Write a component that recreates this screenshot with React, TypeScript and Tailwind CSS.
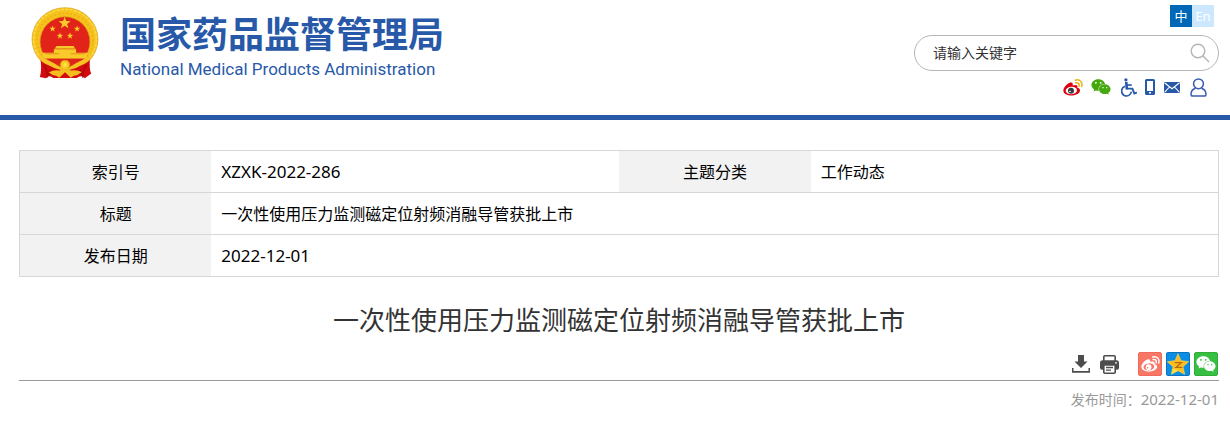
import React, { useState } from 'react';
import { FaWeixin } from 'react-icons/fa';

type DetailCell = { label: string; value: string; latin?: boolean };

const detail_rows: DetailCell[][] = [
    [{ label: '索引号', value: 'XZXK-2022-286', latin: true }, { label: '主题分类', value: '工作动态' }],
    [{ label: '标题', value: '一次性使用压力监测磁定位射频消融导管获批上市' }],
    [{ label: '发布日期', value: '2022-12-01', latin: true }],
];

const STAR = 'M0-10 2.4-3.2 9.5-3.1 3.8 1.2 5.9 8.1 0 4-5.9 8.1-3.8 1.2-9.5-3.1-2.4-3.2Z';

/** National emblem shown beside the agency name. */
function Emblem() {
    return (
        <svg viewBox="34 18 202 214" className="w-[68px] h-[72px] shrink-0" aria-hidden="true">
            <ellipse cx="135" cy="114" rx="98" ry="94" fill="#f6c21c" stroke="#dc9f12" strokeWidth="2" />
            <ellipse cx="135" cy="114" rx="93" ry="89" fill="none" stroke="#fbd945" strokeWidth="5" strokeDasharray="9 4" />
            <ellipse cx="135" cy="116" rx="83" ry="79" fill="none" stroke="#eeb01c" strokeWidth="5" strokeDasharray="6 6" />
            <circle cx="135" cy="121" r="74" fill="#e2231a" stroke="#d59712" strokeWidth="2" />
            <path d="M62 170 C64 190 66 210 60 226 L78 230 Q88 218 100 229 L170 229 Q184 218 194 230 L213 216 C206 200 210 186 208 170 L180 192H90Z" fill="#d30b10" />
            <g fill="#f8cb2a">
                <path d={STAR} transform="translate(134 66) scale(1.9)" />
                <path d={STAR} transform="translate(98 83)" />
                <path d={STAR} transform="translate(171 83)" />
                <path d={STAR} transform="translate(120 104)" />
                <path d={STAR} transform="translate(150 104)" />
                <path d="M110 134h50l6 8h-62zM102 143h66v13h-66zM68 154h134l-5 18H73z" />
            </g>
            <path d="M102 143h66M76 157h42M152 157h42" stroke="#d8770f" strokeWidth="2" />
            <path d="M73 172h124l-12 12H85z" fill="#dd2419" />
            <path d="M72 190q10 10 10 38M92 204l-6 18M200 190q-12 10-12 38M180 204l6 18" stroke="#9c0709" strokeWidth="3" fill="none" />
            <path d="M52 164 Q82 172 104 186 Q120 199 135 197 Q150 199 166 186 Q188 172 218 164 Q206 184 182 192 Q158 206 135 206 Q112 206 88 192 Q64 184 52 164Z" fill="#f6c224" />
            <circle cx="135" cy="190" r="14" fill="#f8c91f" stroke="#d59a12" strokeWidth="3" strokeDasharray="4 3" />
            <circle cx="135" cy="190" r="6" fill="#ffe04d" />
            <path d="M117 207 Q103 204 87 212 L98 220 Q110 221 118 228 L135 212 L152 228 Q160 221 172 220 L185 211 Q169 204 154 207 L135 203Z" fill="#f4bd20" />
        </svg>
    );
}

function WeiboIcon({ className, body, eye, wave, ball }: { className: string; body: string; eye: string; wave: string; ball: string }) {
    return (
        <svg viewBox="0 0 60 50" className={className} aria-hidden="true">
            <path d="M22 10C14 12 1 24 1 34c0 10 12 15 24 15 15 0 26-7 26-15 0-5-4-7-8-8 2-7-2-11-14-7 1-6 0-10-7-9z" fill={body} />
            <ellipse cx="25" cy="34" rx="17" ry="11" fill={eye} transform="rotate(-6 25 34)" />
            <circle cx="24" cy="35" r="9" fill={ball} />
            <circle cx="21" cy="37" r="2.5" fill={eye} />
            <path d="M37 3C50-1 60 9 56 22M38 11c7-2 12 3 10 10" fill="none" stroke={wave} strokeWidth="4.5" strokeLinecap="round" />
        </svg>
    );
}

function SearchIcon() {
    return (
        <svg viewBox="0 0 20 20" className="size-5" fill="none" stroke="#b5b5b5" strokeWidth="1.4" aria-hidden="true">
            <circle cx="8" cy="8" r="6.8" />
            <path d="m13 13 6 6" />
        </svg>
    );
}

function WheelchairIcon() {
    return (
        <svg viewBox="32 16 49 57" className="w-4 h-[19px]" fill="none" stroke="#2859a9" aria-hidden="true">
            <circle cx="47" cy="21" r="5" fill="#2859a9" stroke="none" />
            <path d="M48 27 50 50" strokeWidth="8" />
            <path d="M50 37H65" strokeWidth="5" />
            <path d="M48 48H67L73 63 81 60" strokeWidth="6" />
            <path d="M44 41C31 46 31 63 42 69 52 73 62 68 64 57" strokeWidth="5" />
        </svg>
    );
}

function PhoneIcon() {
    return (
        <svg viewBox="0 0 10 16" className="w-[10px] h-4" aria-hidden="true">
            <path fillRule="evenodd" fill="#2859a9" d="M1.5 0h7Q10 0 10 1.5v13Q10 16 8.5 16h-7Q0 16 0 14.5v-13Q0 0 1.5 0zM2 2v10h6V2zM4 13v1.5h2V13z" />
        </svg>
    );
}

function MailIcon() {
    return (
        <svg viewBox="0 0 16 11" className="w-4 h-[11px]" aria-hidden="true">
            <path fill="#2859a9" d="M0 0h16v11H0z" />
            <path d="M.5.7 8 6.7 15.5.7M.5 10.4 5.5 5M15.5 10.4 10.5 5" fill="none" stroke="#fff" strokeWidth="1.1" />
        </svg>
    );
}

function UserIcon() {
    return (
        <svg viewBox="0 0 17 19" className="w-[17px] h-[19px]" fill="none" stroke="#3a5daf" strokeWidth="1.5" aria-hidden="true">
            <circle cx="8.5" cy="5.8" r="4.9" />
            <path d="M5.5 10.2C2.5 11.3 1 13.5 1 16.2q0 1.8 1.8 1.8h11.4q1.8 0 1.8-1.8c0-2.7-1.5-4.9-4.5-6" strokeLinejoin="round" />
        </svg>
    );
}

function DownloadIcon() {
    return (
        <svg viewBox="0 0 18 18" className="size-[18px]" fill="#4d4d4d" aria-hidden="true">
            <path d="M6 0h6v6.5h3.5L9 13 2.5 6.500H6z" />
            <path d="M0 13h1.5v3h15v-3H18v4.800H0z" />
        </svg>
    );
}

function PrinterIcon() {
    return (
        <svg viewBox="0 0 19 19" className="size-[19px]" aria-hidden="true">
            <path d="M3.8 6V1.8q0-1 1-1h9.4q1 0 1 1V6" fill="#fff" stroke="#4d4d4d" strokeWidth="1.6" />
            <path d="M2.500 5.200h14q2.500 0 2.500 2.500v5q0 2-2 2H2q-2 0-2-2v-5q0-2.500 2.500-2.500z" fill="#4d4d4d" />
            <path d="M3.8 10h11.400v7.200q0 1-1 1H4.800q-1 0-1-1z" fill="#fff" stroke="#4d4d4d" strokeWidth="1.6" />
            <path d="M6 12.500h7M6 15.200h5" stroke="#4d4d4d" strokeWidth="1.3" />
            <circle cx="16" cy="7.800" r=".9" fill="#fff" />
        </svg>
    );
}

function QzoneIcon() {
    return (
        <svg viewBox="0 0 72 72" className="size-6" aria-hidden="true">
            <rect x="1.5" y="1.5" width="69" height="69" rx="4" fill="#0a8ee3" stroke="#0873be" strokeWidth="3" />
            <path d="M36 5 45 26 68 29 51 44 56 67 36 56 16 67 21 44 4 29 27 26Z" fill="#fdbe22" stroke="#fbd34b" strokeWidth="2" strokeLinejoin="round" />
            <path d="M26 32h20L30 46h19" fill="none" stroke="#b9690a" strokeWidth="4" />
            <path d="m17 65 4-15 17 5z" fill="#ffe04b" />
        </svg>
    );
}

export default function App() {
    const [keyword, setKeyword] = useState('');

    return (
        <div className="bg-white text-black font-['Noto_Sans','Noto_Sans_CJK_SC',sans-serif]">
            <header className="flex justify-between h-[120px] border-b-5 border-[#2859a9] pl-[31px] pr-[11px]">
                <a href="#" className="flex items-start gap-[21px] pt-[7px] h-20 text-[#2859a9]">
                    <Emblem />
                    <span className="flex flex-col whitespace-nowrap pt-[5px]">
                        <span className="text-[36px] leading-10 font-bold font-['Noto_Sans_CJK_SC',sans-serif]">国家药品监督管理局</span>
                        <span className="mt-[5px] text-[17px] leading-6 font-[Roboto,'Liberation_Sans',sans-serif]">National Medical Products Administration</span>
                    </span>
                </a>

                <div className="flex flex-col items-end pt-[5px]">
                    <div className="flex mr-[5px] text-[13px] leading-[22px] text-white text-center">
                        <button type="button" className="w-[22px] h-[22px] bg-[#0068b7]">中</button>
                        <button type="button" className="w-[22px] h-[22px] bg-[#cce8ff]">En</button>
                    </div>
                    <form className="flex items-center mt-2 w-[305px] h-9 rounded-full border border-[#b5b5b5] pl-[18px] pr-2" onSubmit={(e) => e.preventDefault()}>
                        <input
                            type="text"
                            aria-label="请输入关键字"
                            placeholder="请输入关键字"
                            value={keyword}
                            onChange={(e) => setKeyword(e.target.value)}
                            className="flex-1 min-w-0 text-sm outline-none placeholder:text-[#333]"
                        />
                        <button type="submit" aria-label="搜索"><SearchIcon /></button>
                    </form>
                    <nav className="flex items-center mt-[6px] mr-3 h-5">
                        <a href="#" aria-label="微博">
                            <WeiboIcon className="w-5 h-[17px]" body="#e0000f" eye="#fff" wave="#eeb111" ball="#3b3b3b" />
                        </a>
                        <a href="#" aria-label="微信" className="ml-2"><FaWeixin size={20} color="#45a80f" /></a>
                        <a href="#" aria-label="无障碍" className="ml-[10px]"><WheelchairIcon /></a>
                        <a href="#" aria-label="手机版" className="ml-2"><PhoneIcon /></a>
                        <a href="#" aria-label="邮箱" className="ml-[9px]"><MailIcon /></a>
                        <a href="#" aria-label="用户" className="ml-[10px]"><UserIcon /></a>
                    </nav>
                </div>
            </header>

            <main className="pt-[30px] pl-[19px] pr-[11px]">
                <table className="w-full table-fixed border-collapse border border-[#d7d7d7] text-base">
                    <colgroup>
                        <col className="w-[16%]" />
                        <col className="w-[34%]" />
                        <col className="w-[16%]" />
                        <col className="w-[34%]" />
                    </colgroup>
                    <tbody>
                        {detail_rows.map((row) => (
                            <tr key={row[0].label} className="h-[42px] border-b border-[#d7d7d7]">
                                {row.map((cell) => (
                                    <React.Fragment key={cell.label}>
                                        <th scope="row" className="bg-[#f2f2f2] font-normal text-center">{cell.label}</th>
                                        <td colSpan={row.length === 1 ? 3 : 1} className={`px-[10px] ${cell.latin ? 'text-[17px]' : ''}`}>{cell.value}</td>
                                    </React.Fragment>
                                ))}
                            </tr>
                        ))}
                    </tbody>
                </table>

                <h1 className="mt-[23px] text-center text-[26px] leading-10 text-[#333]">一次性使用压力监测磁定位射频消融导管获批上市</h1>

                {/* Share toolbar */}
                <div className="flex justify-end items-center mt-3 pb-1 pr-px border-b border-[#999]">
                    <button type="button" aria-label="下载"><DownloadIcon /></button>
                    <button type="button" aria-label="打印" className="ml-[10px]"><PrinterIcon /></button>
                    <a href="#" aria-label="分享到微博" className="ml-[19px] flex items-center justify-center size-6 rounded-xs bg-[#f67766] border border-[#ef6a5a]">
                        <WeiboIcon className="w-[19px] h-4" body="#fff" eye="#f67766" wave="#fff" ball="#fff" />
                    </a>
                    <a href="#" aria-label="分享到QQ空间" className="ml-1"><QzoneIcon /></a>
                    <a href="#" aria-label="分享到微信" className="ml-1 flex items-center justify-center size-6 rounded-xs bg-[#36bf41] border border-[#2eae38]">
                        <FaWeixin size={20} color="#fff" />
                    </a>
                </div>
                <p className="mt-[7px] text-right text-sm leading-[22px] text-[#999]">
                    发布时间：<time dateTime="2022-12-01" className="text-[15px]">2022-12-01</time>
                </p>
            </main>
        </div>
    );
}
